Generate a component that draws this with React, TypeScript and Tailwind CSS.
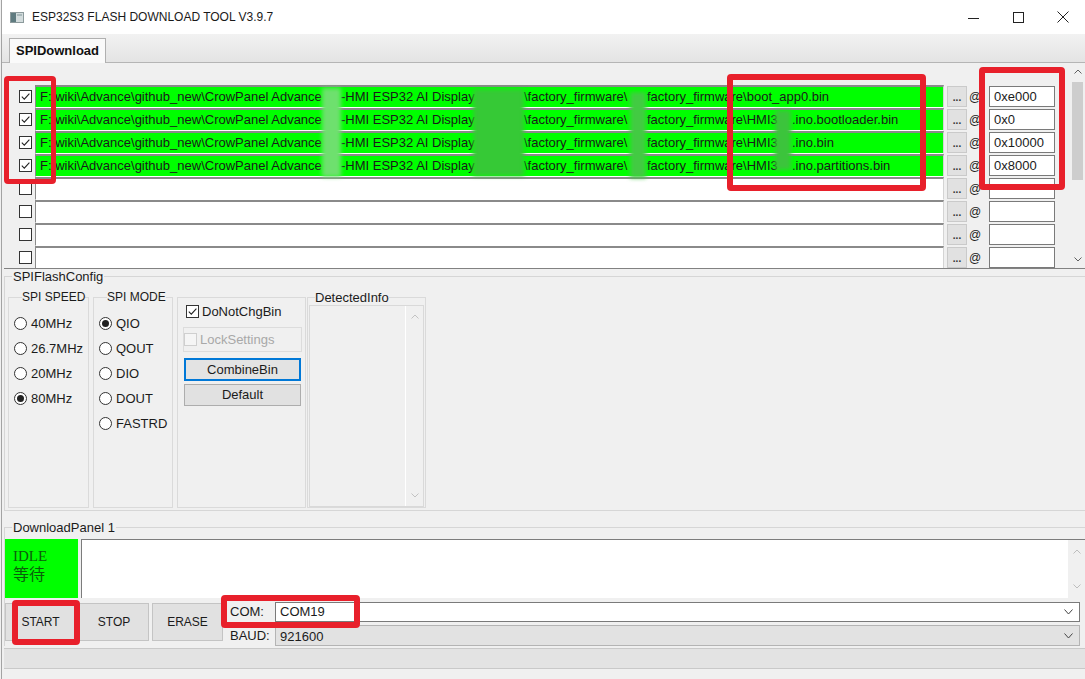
import React from "react";

const FONT = "font-['Liberation_Sans','Noto_Sans_CJK_SC',sans-serif]";

type FileRow = {
  tail: string[];
  addr: string;
};

const FILES: FileRow[] = [
  { tail: ["factory_firmware\\boot_app0.bin"], addr: "0xe000" },
  { tail: ["factory_firmware\\HMI3", ".ino.bootloader.bin"], addr: "0x0" },
  { tail: ["factory_firmware\\HMI3", ".ino.bin"], addr: "0x10000" },
  { tail: ["factory_firmware\\HMI3", ".ino.partitions.bin"], addr: "0x8000" },
];

function Chev({ dir, color, w = 8 }: { dir: "up" | "down"; color: string; w?: number }) {
  const h = Math.round(w / 2) + 1;
  const pts =
    dir === "up"
      ? `0.5,${h - 0.5} ${w / 2},1 ${w - 0.5},${h - 0.5}`
      : `0.5,0.5 ${w / 2},${h - 1} ${w - 0.5},0.5`;
  return (
    <svg width={w} height={h} viewBox={`0 0 ${w} ${h}`}>
      <polyline points={pts} fill="none" stroke={color} strokeWidth="1" />
    </svg>
  );
}

function Check({ checked, disabled }: { checked?: boolean; disabled?: boolean }) {
  return (
    <span
      className={`flex h-[13px] w-[13px] shrink-0 items-center justify-center border ${
        disabled ? "border-[#cfcfcf] bg-[#f5f5f5]" : "border-[#333333] bg-white"
      }`}
    >
      {checked && (
        <svg width="11" height="11" viewBox="0 0 11 11">
          <polyline points="1.8,5.6 4.3,8.1 9.4,2.6" fill="none" stroke="#222" strokeWidth="1.1" />
        </svg>
      )}
    </span>
  );
}

function Radio({ label, checked }: { label: string; checked?: boolean }) {
  return (
    <div className="flex h-[25px] items-center gap-[4px]">
      <span className="flex h-[13px] w-[13px] items-center justify-center rounded-full border border-[#333333] bg-white">
        {checked && <span className="h-[7px] w-[7px] rounded-full bg-[#222222]" />}
      </span>
      <span className="text-[13px]">{label}</span>
    </div>
  );
}

function TitleBar() {
  return (
    <div className="flex h-[34px] items-center bg-white pl-[8px]">
      <svg width="14" height="11" viewBox="0 0 14 11">
        <rect x="0.5" y="0.5" width="13" height="10" fill="#d3dcdd" stroke="#8c9a9c" />
        <rect x="1" y="1" width="5" height="9" fill="#5f7b80" />
        <rect x="7" y="2" width="5" height="2" fill="#a9b8ba" />
      </svg>
      <span className="ml-[8px] text-[12px] text-[#1a1a1a]">ESP32S3 FLASH DOWNLOAD TOOL V3.9.7</span>
      <div className="ml-auto flex h-full">
        <div className="flex w-[45px] items-center justify-center">
          <svg width="11" height="11" viewBox="0 0 11 11">
            <line x1="0" y1="6.5" x2="11" y2="6.5" stroke="#222" strokeWidth="1" />
          </svg>
        </div>
        <div className="flex w-[45px] items-center justify-center">
          <svg width="11" height="11" viewBox="0 0 11 11">
            <rect x="0.5" y="0.5" width="10" height="10" fill="none" stroke="#222" strokeWidth="1" />
          </svg>
        </div>
        <div className="flex w-[44px] items-center justify-center">
          <svg width="12" height="12" viewBox="0 0 12 12">
            <path d="M0.5 0.5 L11.5 11.5 M11.5 0.5 L0.5 11.5" stroke="#222" strokeWidth="1" />
          </svg>
        </div>
      </div>
    </div>
  );
}

function TabStrip() {
  return (
    <div className="flex h-[29px] items-end border-b border-[#b5b5b5] bg-gradient-to-b from-[#f2f2f2] to-[#e4e4e4] pl-[7px]">
      <div className="relative top-[1px] flex h-[25px] w-[97px] items-center justify-center border border-b-0 border-[#b0b0b0] bg-[#fafafa] text-[13px] font-bold text-[#111]">
        SPIDownload
      </div>
    </div>
  );
}

function PathInput({ row }: { row?: FileRow }) {
  return (
    <div
      className={`ml-[3px] flex h-[23px] w-[909px] items-center overflow-hidden whitespace-nowrap border-t-2 border-r border-b border-l border-t-[#8a8a8a] border-l-[#8a8a8a] border-r-[#d4d4d4] border-b-white pl-[4px] text-[13px] text-[#1a1a1a] ${
        row ? "bg-[#00ff00]" : "bg-white"
      }`}
    >
      {row && (
        <>
          <span className="inline-block w-[282px] shrink-0">F:\wiki\Advance\github_new\CrowPanel Advance</span>
          <span className="inline-block w-[19px] shrink-0" />
          <span className="inline-block w-[132px] shrink-0">-HMI ESP32 AI Display</span>
          <span className="inline-block w-[51px] shrink-0" />
          <span className="inline-block w-[106px] shrink-0">\factory_firmware\</span>
          <span className="inline-block w-[17px] shrink-0" />
          {row.tail.length === 1 ? (
            <span>{row.tail[0]}</span>
          ) : (
            <>
              <span className="inline-block w-[128px] shrink-0">{row.tail[0]}</span>
              <span className="inline-block w-[17px] shrink-0" />
              <span>{row.tail[1]}</span>
            </>
          )}
        </>
      )}
    </div>
  );
}

function ListRow({ row }: { row?: FileRow }) {
  return (
    <div className="flex h-[23px] items-center">
      <span className="ml-[15px]">
        <Check checked={!!row} />
      </span>
      <PathInput row={row} />
      <div className="ml-[3px] flex h-[21px] w-[20px] items-end justify-center border border-[#cacaca] bg-[#e1e1e1] pb-[3px] text-[10px] font-bold leading-[10px] text-[#333]">
        ...
      </div>
      <span className="ml-[2px] w-[12px] text-center text-[12px] text-[#222]">@</span>
      <div className="ml-[8px] flex h-[21px] w-[66px] items-center border border-[#7a7a7a] bg-white pl-[4px] text-[13px]">
        {row?.addr}
      </div>
    </div>
  );
}

function FileList() {
  const rows: (FileRow | undefined)[] = [...FILES, undefined, undefined, undefined, undefined];
  return (
    <div className="flex h-[206px] border-b border-[#828282]">
      <div className="flex-1 overflow-hidden pt-[22px]">
        {rows.map((r, i) => (
          <ListRow key={i} row={r} />
        ))}
      </div>
      <div className="flex w-[15px] flex-col bg-[#f0f0f0]">
        <div className="flex h-[17px] items-center justify-center">
          <Chev dir="up" color="#606060" />
        </div>
        <div className="mx-[2px] mt-[2px] h-[98px] bg-[#cdcdcd]" />
        <div className="flex-1" />
        <div className="flex h-[17px] items-center justify-center">
          <Chev dir="down" color="#606060" />
        </div>
      </div>
    </div>
  );
}

function FlashConfig() {
  return (
    <fieldset className="flex h-[242px] border-t border-b border-l border-[#d6d6d6]">
      <legend className="ml-[7px] px-[1px] text-[13px] leading-[15px]">SPIFlashConfig</legend>
      <div className="flex">
        <fieldset className="ml-[3px] mt-[6px] h-[218px] w-[81px] border border-[#dadada] pl-[5px]">
          <legend className="ml-[8px] text-[12px] leading-[15px]">SPI SPEED</legend>
          <div className="pt-[6px]">
            <Radio label="40MHz" />
            <Radio label="26.7MHz" />
            <Radio label="20MHz" />
            <Radio label="80MHz" checked />
          </div>
        </fieldset>
        <fieldset className="ml-[4px] mt-[6px] h-[218px] w-[80px] border border-[#dadada] pl-[5px]">
          <legend className="ml-[8px] text-[12px] leading-[15px]">SPI MODE</legend>
          <div className="pt-[6px]">
            <Radio label="QIO" checked />
            <Radio label="QOUT" />
            <Radio label="DIO" />
            <Radio label="DOUT" />
            <Radio label="FASTRD" />
          </div>
        </fieldset>
        <div className="ml-[4px] mt-[13px] h-[211px] w-[129px] border border-[#dadada] pl-[5px] pt-[7px]">
          <div className="ml-[3px] flex items-center gap-[3px]">
            <Check checked />
            <span className="text-[13px] leading-[13px]">DoNotChgBin</span>
          </div>
          <div className="mt-[9px] flex h-[25px] w-[119px] items-center gap-[3px] border border-[#dcdcdc]">
            <Check disabled />
            <span className="text-[13px] text-[#a8a8a8]">LockSettings</span>
          </div>
          <div className="ml-[1px] mt-[6px] flex h-[23px] w-[117px] items-center justify-center border-2 border-[#0078d7] bg-[#e3e3e3] text-[13px]">
            CombineBin
          </div>
          <div className="ml-[1px] mt-[3px] flex h-[22px] w-[117px] items-center justify-center border border-[#adadad] bg-[#e1e1e1] text-[13px]">
            Default
          </div>
        </div>
        <fieldset className="ml-[1px] mt-[6px] h-[218px] w-[119px] border border-[#dadada]">
          <legend className="ml-[7px] text-[13px] leading-[15px]">DetectedInfo</legend>
          <div className="mx-[1px] flex h-[202px] border border-[#d9d9d9]">
            <div className="flex-1 border-r border-white" />
            <div className="flex w-[17px] flex-col items-center justify-between py-[8px]">
              <Chev dir="up" color="#c2c2c2" />
              <Chev dir="down" color="#c2c2c2" />
            </div>
          </div>
        </fieldset>
      </div>
    </fieldset>
  );
}

function Btn({ label, w, ml }: { label: string; w: string; ml: string }) {
  return (
    <div className={`${w} ${ml} mt-[1px] flex h-[38px] items-center justify-center border border-[#c4c4c4] bg-[#e1e1e1] text-[12px]`}>
      {label}
    </div>
  );
}

function DownloadPanel() {
  return (
    <fieldset className="mt-[9px] border-t border-l border-[#d6d6d6]">
      <legend className="ml-[7px] px-[1px] text-[13px] leading-[15px]">DownloadPanel 1</legend>
      <div className="flex pt-[4px]">
        <div className="h-[59px] w-[73px] bg-[#00ff00] pl-[8px] pt-[9px] font-['Liberation_Serif','Noto_Sans_CJK_SC',serif] text-[#0b5e0b]">
          <div className="text-[15px] leading-[17px]">IDLE</div>
          <div className="text-[16px] leading-[19px]">等待</div>
        </div>
        <div className="ml-[3px] flex h-[59px] flex-1 border-t border-l border-[#7c7c7c] bg-white">
          <div className="flex-1" />
          <div className="flex w-[17px] flex-col items-center justify-between bg-[#f0f0f0] py-[9px]">
            <Chev dir="up" color="#bdbdbd" />
            <Chev dir="down" color="#bdbdbd" />
          </div>
        </div>
      </div>
      <div className="mt-[4px] flex items-start">
        <Btn label="START" w="w-[71px]" ml="ml-0" />
        <Btn label="STOP" w="w-[70px]" ml="ml-[3px]" />
        <Btn label="ERASE" w="w-[71px]" ml="ml-[3px]" />
        <div className="ml-[7px] flex w-[45px] flex-col text-[13px]">
          <span className="flex h-[20px] items-center">COM:</span>
          <span className="mt-[3px] flex h-[21px] items-center">BAUD:</span>
        </div>
        <div className="mr-[5px] flex flex-1 flex-col text-[13px]">
          <div className="flex h-[20px] items-center justify-between border border-[#7a7a7a] bg-white pl-[4px] pr-[6px]">
            <span>COM19</span>
            <Chev dir="down" color="#444" w={9} />
          </div>
          <div className="mt-[3px] flex h-[21px] items-center justify-between border border-[#b4b4b4] bg-[#e2e2e2] pl-[4px] pr-[6px]">
            <span className="pt-[2px]">921600</span>
            <Chev dir="down" color="#444" w={9} />
          </div>
        </div>
      </div>
    </fieldset>
  );
}

function Overlays() {
  const red = "pointer-events-none absolute rounded-[4px] border-[#e8202b]";
  return (
    <>
      <div className="pointer-events-none absolute left-[322px] top-[88px] h-[89px] w-[19px] bg-[#6ee06e] blur-[2px]" />
      <div className="pointer-events-none absolute left-[473px] top-[89px] h-[87px] w-[51px] bg-[#36c936] blur-[2px]" />
      <div className="pointer-events-none absolute left-[630px] top-[92px] h-[86px] w-[16px] bg-[#42cb42] blur-[2px]" />
      <div className="pointer-events-none absolute left-[775px] top-[110px] h-[60px] w-[16px] bg-[#3cc43c] blur-[2px]" />
      <div className={`${red} left-[4px] top-[76px] h-[108px] w-[52px] border-[5px]`} />
      <div className={`${red} left-[727px] top-[74px] h-[117px] w-[199px] border-[6px]`} />
      <div className={`${red} left-[979px] top-[67px] h-[123px] w-[86px] border-[6px]`} />
      <div className={`${red} left-[12px] top-[600px] h-[45px] w-[68px] border-[6px]`} />
      <div className={`${red} left-[221px] top-[595px] h-[33px] w-[139px] border-[6px]`} />
    </>
  );
}

export default function App() {
  return (
    <div className={`relative h-[679px] w-[1085px] overflow-hidden bg-[#f0f0f0] text-[#1b1b1b] ${FONT}`}>
      <div className="ml-[1px] flex h-full flex-col border-l border-[#a3a3a3]">
        <TitleBar />
        <TabStrip />
        <div className="flex flex-1 flex-col pl-[2px]">
          <FileList />
          <FlashConfig />
          <DownloadPanel />
          <div className="mt-[2px] h-[21px] border-t border-b border-[#c9c9c9] bg-[#e3e3e3]" />
        </div>
      </div>
      <Overlays />
    </div>
  );
}
